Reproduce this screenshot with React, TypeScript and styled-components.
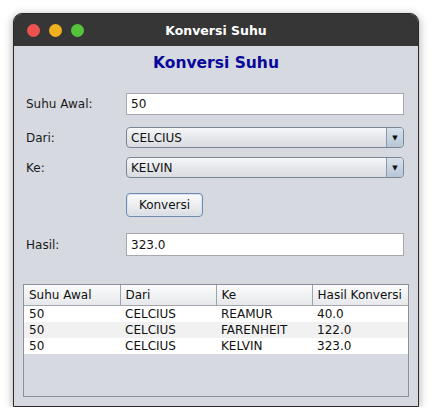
import React, { useState } from 'react';
import styled, { createGlobalStyle } from 'styled-components';

const GlobalStyle = createGlobalStyle`
  body {
    margin: 0;
    background: #ffffff;
    font-family: "DejaVu Sans", sans-serif;
  }
`;

const Window = styled.div`
  box-sizing: border-box;
  width: 406px;
  height: 394px;
  margin: 13px 0 0 13px;
  border: 1px solid #2a2a2a;
  border-radius: 9px 9px 0 0;
  background: #d6d9e0;
  box-shadow: 0 2px 10px rgba(0, 0, 0, 0.35);
  display: flex;
  flex-direction: column;
  overflow: hidden;
`;

const TitleBar = styled.div`
  height: 32px;
  background: #363636;
  display: flex;
  align-items: center;
  position: relative;
  padding-left: 13px;
  gap: 9px;
`;

const Dot = styled.span<{ $color: string }>`
  width: 13px;
  height: 13px;
  border-radius: 50%;
  background: ${(p) => p.$color};
`;

const TitleText = styled.div`
  position: absolute;
  left: 0;
  right: 0;
  text-align: center;
  color: #ffffff;
  font-weight: bold;
  font-size: 12.5px;
  pointer-events: none;
`;

const Content = styled.div`
  flex: 1;
  display: flex;
  flex-direction: column;
`;

const Heading = styled.h1`
  margin: 7px 0 0;
  height: 20px;
  line-height: 20px;
  text-align: center;
  font-size: 15.5px;
  font-weight: bold;
  color: #07079a;
`;

const Form = styled.div`
  margin: 20px 14px 0 12px;
  display: flex;
  flex-direction: column;
`;

const Row = styled.div<{ $gap: number; $h: number }>`
  display: grid;
  grid-template-columns: 100px 1fr;
  align-items: center;
  margin-top: ${(p) => p.$gap}px;
  height: ${(p) => p.$h}px;
`;

const Label = styled.label`
  font-size: 12px;
  color: #1a1a1a;
`;

const TextField = styled.input`
  box-sizing: border-box;
  height: 100%;
  width: 100%;
  border: 1px solid #a6a8ad;
  background: #ffffff;
  padding: 0 0 0 4px;
  font-family: "DejaVu Sans", sans-serif;
  font-size: 12px;
  color: #111;
  outline: none;
`;

const Combo = styled.div`
  box-sizing: border-box;
  height: 100%;
  display: flex;
  border: 1px solid #7c8592;
  border-radius: 4px;
  overflow: hidden;
  background: linear-gradient(#f6f7f9, #e4e6ea 55%, #d9dce1);
`;

const ComboValue = styled.div`
  flex: 1;
  display: flex;
  align-items: center;
  padding-left: 4px;
  font-size: 12px;
  color: #111;
`;

const ComboArrow = styled.div`
  width: 16px;
  border-left: 1px solid #8d99a8;
  background: linear-gradient(#d8e2ec, #b6c6d6);
  display: flex;
  align-items: center;
  justify-content: center;
  font-size: 7px;
  color: #111;
`;

const Button = styled.button`
  box-sizing: border-box;
  width: 77px;
  height: 24px;
  border: 1px solid #6f8cad;
  border-radius: 4px;
  box-shadow: inset 0 0 0 1px #d7e3f0;
  background: linear-gradient(#fbfbfc, #e9ebee 60%, #d8dbe0);
  font-family: "DejaVu Sans", sans-serif;
  font-size: 12px;
  color: #111;
  padding: 0;
`;

const TableBox = styled.div`
  box-sizing: border-box;
  margin: 28px 9px 0 9px;
  height: 113px;
  border: 1px solid #8b9099;
  background: #d6d9e0;
`;

const Table = styled.table`
  width: 100%;
  border-collapse: collapse;
  table-layout: fixed;
  font-size: 12px;
  color: #111;
`;

const Th = styled.th`
  height: 20px;
  padding: 0 0 0 5px;
  text-align: left;
  font-weight: normal;
  background: linear-gradient(#fbfbfb, #e6e8eb);
  border-bottom: 1px solid #a3a6ab;
  border-right: 1px solid #9fa2a8;
  white-space: nowrap;
  overflow: hidden;
  &:last-child {
    border-right: none;
  }
`;

const Tr = styled.tr<{ $alt: boolean }>`
  background: ${(p) => (p.$alt ? '#f1f1f1' : '#ffffff')};
`;

const Td = styled.td`
  height: 16px;
  padding: 0 0 0 5px;
  line-height: 16px;
  white-space: nowrap;
`;

const Arrow = () => <span>&#9660;</span>;

const riwayat = [
  { awal: '50', dari: 'CELCIUS', ke: 'REAMUR', hasil: '40.0' },
  { awal: '50', dari: 'CELCIUS', ke: 'FARENHEIT', hasil: '122.0' },
  { awal: '50', dari: 'CELCIUS', ke: 'KELVIN', hasil: '323.0' },
];

export default function App() {
  const [suhu, setSuhu] = useState('50');

  return (
    <>
      <GlobalStyle />
      <Window>
        <TitleBar>
          <Dot $color="#ec5350" />
          <Dot $color="#f0b020" />
          <Dot $color="#55c43a" />
          <TitleText>Konversi Suhu</TitleText>
        </TitleBar>
        <Content>
          <Heading>Konversi Suhu</Heading>
          <Form>
            <Row $gap={0} $h={22}>
              <Label>Suhu Awal:</Label>
              <TextField value={suhu} onChange={(e) => setSuhu(e.target.value)} />
            </Row>
            <Row $gap={12} $h={21}>
              <Label>Dari:</Label>
              <Combo>
                <ComboValue>CELCIUS</ComboValue>
                <ComboArrow><Arrow /></ComboArrow>
              </Combo>
            </Row>
            <Row $gap={9} $h={21}>
              <Label>Ke:</Label>
              <Combo>
                <ComboValue>KELVIN</ComboValue>
                <ComboArrow><Arrow /></ComboArrow>
              </Combo>
            </Row>
            <Row $gap={15} $h={24}>
              <span />
              <div>
                <Button>Konversi</Button>
              </div>
            </Row>
            <Row $gap={16} $h={23}>
              <Label>Hasil:</Label>
              <TextField value="323.0" readOnly />
            </Row>
          </Form>
          <TableBox>
            <Table>
              <thead>
                <tr>
                  <Th>Suhu Awal</Th>
                  <Th>Dari</Th>
                  <Th>Ke</Th>
                  <Th>Hasil Konversi</Th>
                </tr>
              </thead>
              <tbody>
                {riwayat.map((r, i) => (
                  <Tr key={i} $alt={i % 2 === 1}>
                    <Td>{r.awal}</Td>
                    <Td>{r.dari}</Td>
                    <Td>{r.ke}</Td>
                    <Td>{r.hasil}</Td>
                  </Tr>
                ))}
              </tbody>
            </Table>
          </TableBox>
        </Content>
      </Window>
    </>
  );
}
